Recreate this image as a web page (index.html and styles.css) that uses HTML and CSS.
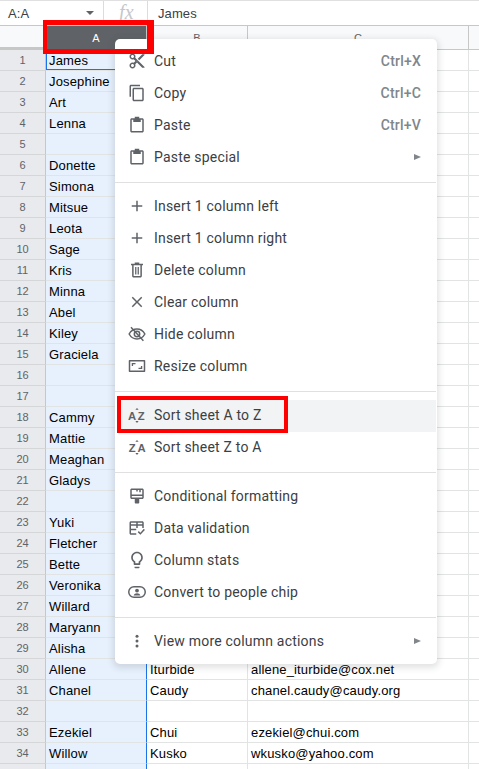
FILE: index.html
```html
<!DOCTYPE html>
<html lang="en">
<head>
<meta charset="utf-8">
<title>Sheet</title>
<link rel="stylesheet" href="styles.css">
</head>
<body>
<div class="app">
  <div class="formula-bar">
    <div class="name-box"><span>A:A</span><i class="caret"></i></div>
    <div class="fx">fx</div>
    <div class="formula-value">James</div>
  </div>
  <table class="sheet">
    <colgroup><col class="c0"><col class="c1"><col class="c2"><col class="c3"><col class="c4"></colgroup>
    <thead><tr><th class="corner"></th><th class="head sel">A</th><th class="head">B</th><th class="head">C</th><th class="head"></th></tr></thead>
    <tbody>
      <tr><th>1</th><td class="a active">James</td><td></td><td></td><td></td></tr>
      <tr><th>2</th><td class="a">Josephine</td><td></td><td></td><td></td></tr>
      <tr><th>3</th><td class="a">Art</td><td></td><td></td><td></td></tr>
      <tr><th>4</th><td class="a">Lenna</td><td></td><td></td><td></td></tr>
      <tr><th>5</th><td class="a"></td><td></td><td></td><td></td></tr>
      <tr><th>6</th><td class="a">Donette</td><td></td><td></td><td></td></tr>
      <tr><th>7</th><td class="a">Simona</td><td></td><td></td><td></td></tr>
      <tr><th>8</th><td class="a">Mitsue</td><td></td><td></td><td></td></tr>
      <tr><th>9</th><td class="a">Leota</td><td></td><td></td><td></td></tr>
      <tr><th>10</th><td class="a">Sage</td><td></td><td></td><td></td></tr>
      <tr><th>11</th><td class="a">Kris</td><td></td><td></td><td></td></tr>
      <tr><th>12</th><td class="a">Minna</td><td></td><td></td><td></td></tr>
      <tr><th>13</th><td class="a">Abel</td><td></td><td></td><td></td></tr>
      <tr><th>14</th><td class="a">Kiley</td><td></td><td></td><td></td></tr>
      <tr><th>15</th><td class="a">Graciela</td><td></td><td></td><td></td></tr>
      <tr><th>16</th><td class="a"></td><td></td><td></td><td></td></tr>
      <tr><th>17</th><td class="a"></td><td></td><td></td><td></td></tr>
      <tr><th>18</th><td class="a">Cammy</td><td></td><td></td><td></td></tr>
      <tr><th>19</th><td class="a">Mattie</td><td></td><td></td><td></td></tr>
      <tr><th>20</th><td class="a">Meaghan</td><td></td><td></td><td></td></tr>
      <tr><th>21</th><td class="a">Gladys</td><td></td><td></td><td></td></tr>
      <tr><th>22</th><td class="a"></td><td></td><td></td><td></td></tr>
      <tr><th>23</th><td class="a">Yuki</td><td></td><td></td><td></td></tr>
      <tr><th>24</th><td class="a">Fletcher</td><td></td><td></td><td></td></tr>
      <tr><th>25</th><td class="a">Bette</td><td></td><td></td><td></td></tr>
      <tr><th>26</th><td class="a">Veronika</td><td></td><td></td><td></td></tr>
      <tr><th>27</th><td class="a">Willard</td><td></td><td></td><td></td></tr>
      <tr><th>28</th><td class="a">Maryann</td><td></td><td></td><td></td></tr>
      <tr><th>29</th><td class="a">Alisha</td><td></td><td></td><td></td></tr>
      <tr><th>30</th><td class="a">Allene</td><td>Iturbide</td><td>allene_iturbide@cox.net</td><td></td></tr>
      <tr><th>31</th><td class="a">Chanel</td><td>Caudy</td><td>chanel.caudy@caudy.org</td><td></td></tr>
      <tr><th>32</th><td class="a"></td><td></td><td></td><td></td></tr>
      <tr><th>33</th><td class="a">Ezekiel</td><td>Chui</td><td>ezekiel@chui.com</td><td></td></tr>
      <tr><th>34</th><td class="a">Willow</td><td>Kusko</td><td>wkusko@yahoo.com</td><td></td></tr>
      <tr><th></th><td class="a"></td><td></td><td></td><td></td></tr>
    </tbody>
  </table>

  <div class="menu">
    <div class="item"><svg class="ic" viewBox="0 0 24 24"><path d="M9.64 7.64c.23-.5.36-1.05.36-1.64 0-2.21-1.79-4-4-4S2 3.79 2 6s1.79 4 4 4c.59 0 1.14-.13 1.64-.36L10 12l-2.36 2.36C7.14 14.13 6.59 14 6 14c-2.21 0-4 1.79-4 4s1.79 4 4 4 4-1.79 4-4c0-.59-.13-1.14-.36-1.64L12 14l7 7h3v-1L9.64 7.64zM6 8c-1.1 0-2-.89-2-2s.9-2 2-2 2 .89 2 2-.9 2-2 2zm0 12c-1.1 0-2-.89-2-2s.9-2 2-2 2 .89 2 2-.9 2-2 2zm6-7.5c-.28 0-.5-.22-.5-.5s.22-.5.5-.5.5.22.5.5-.22.5-.5.5zM19 3l-6 6 2 2 7-7V3h-3z"/></svg><span class="label">Cut</span><span class="key">Ctrl+X</span></div>
    <div class="item"><svg class="ic" viewBox="0 0 24 24"><path d="M16 1H4c-1.1 0-2 .9-2 2v14h2V3h12V1zm3 4H8c-1.1 0-2 .9-2 2v14c0 1.1.9 2 2 2h11c1.1 0 2-.9 2-2V7c0-1.1-.9-2-2-2zm0 16H8V7h11v14z"/></svg><span class="label">Copy</span><span class="key">Ctrl+C</span></div>
    <div class="item"><svg class="ic" viewBox="0 0 24 24"><path d="M19 3h-4V1H9v2H5c-1.1 0-2 .9-2 2v15c0 1.1.9 2 2 2h14c1.1 0 2-.9 2-2V5c0-1.1-.9-2-2-2zm0 17H5V5h2v3h10V5h2v15z"/></svg><span class="label">Paste</span><span class="key">Ctrl+V</span></div>
    <div class="item"><svg class="ic" viewBox="0 0 24 24"><path d="M19 3h-4V1H9v2H5c-1.1 0-2 .9-2 2v15c0 1.1.9 2 2 2h14c1.1 0 2-.9 2-2V5c0-1.1-.9-2-2-2zm0 17H5V5h2v3h10V5h2v15z"/></svg><span class="label">Paste special</span><i class="arrow"></i></div>
    <div class="sep"></div>
    <div class="item"><svg class="ic" viewBox="0 0 24 24"><path d="M19 13h-6v6h-2v-6H5v-2h6V5h2v6h6v2z"/></svg><span class="label">Insert 1 column left</span></div>
    <div class="item"><svg class="ic" viewBox="0 0 24 24"><path d="M19 13h-6v6h-2v-6H5v-2h6V5h2v6h6v2z"/></svg><span class="label">Insert 1 column right</span></div>
    <div class="item"><svg class="ic" viewBox="0 0 24 24"><path d="M15 2H9v1.5H4V5.5h1.5V20c0 1.1.9 2 2 2h9c1.100 0 2-.9 2-2V5.500H20V3.500h-5V2zM16.500 20h-9V5.500h9V20zM9.500 8h1.700v10H9.500V8zm3.300 0h1.700v10h-1.700V8z"/></svg><span class="label">Delete column</span></div>
    <div class="item"><svg class="ic" viewBox="0 0 24 24"><path d="M19 6.410 17.590 5 12 10.590 6.410 5 5 6.410 10.590 12 5 17.590 6.410 19 12 13.410 17.590 19 19 17.590 13.410 12z"/></svg><span class="label">Clear column</span></div>
    <div class="item"><svg class="ic" viewBox="0 0 24 24"><path class="line" d="M1.500 12C4 7.500 7.700 5.300 12 5.300s8 2.200 10.500 6.700C20 16.500 16.300 18.700 12 18.700S4 16.500 1.500 12z"/><circle class="line" cx="12" cy="12" r="3.600"/><path class="line" d="M4 3l16.500 18"/></svg><span class="label">Hide column</span></div>
    <div class="item"><svg class="ic" viewBox="0 0 24 24"><path d="M2 4h20c.6 0 1 .4 1 1v14c0 .6-.4 1-1 1H2c-.6 0-1-.4-1-1V5c0-.6.4-1 1-1zm1 2v12h18V6H3zm2 2h5v1.800H6.800V12H5V8zm14 8h-5v-1.800h3.200V12H19v4z"/></svg><span class="label">Resize column</span></div>
    <div class="sep"></div>
    <div class="item hover"><svg class="ic" viewBox="0 0 24 24"><text class="az" x="0" y="18.500">A</text><text class="az" x="13" y="18.500">Z</text><path d="M9.800 5 12 2.500 14.200 5zM12 22.500 9.800 20h4.400z"/></svg><span class="label">Sort sheet A to Z</span></div>
    <div class="item"><svg class="ic" viewBox="0 0 24 24"><text class="az" x="1" y="18.500">Z</text><text class="az" x="12.500" y="18.500">A</text><path d="M9.800 5 12 2.500 14.200 5zM12 22.500 9.800 20h4.400z"/></svg><span class="label">Sort sheet Z to A</span></div>
    <div class="sep"></div>
    <div class="item"><svg class="ic" viewBox="0 0 24 24"><path d="M5 2h14c1.100 0 2 .9 2 2v10c0 1.100-.9 2-2 2h-4v5c0 .6-.4 1-1 1h-4c-.6 0-1-.4-1-1v-5H5c-1.100 0-2-.9-2-2V4c0-1.100.9-2 2-2zm0 2v6h14V4h-2v3h-2V4h-2v2h-2V4H5zm0 8v2h14v-2H5z"/></svg><span class="label">Conditional formatting</span></div>
    <div class="item"><svg class="ic" viewBox="0 0 24 24"><path d="M4 3h15c1.100 0 2 .9 2 2v7h-2V9h-6v3h-2V9H4v4h7v2H4v4h7v2H4c-1.100 0-2-.9-2-2V5c0-1.100.9-2 2-2zm0 2v2h7V5H4zm9 0v2h6V5h-6zm9.500 9.500L16.500 21 13 17.500l1.400-1.400 2.100 2.100 4.600-5.100z"/></svg><span class="label">Data validation</span></div>
    <div class="item"><svg class="ic bulb" viewBox="0 0 24 24"><path d="M9 21c0 .55.45 1 1 1h4c.55 0 1-.45 1-1v-1H9v1zm3-19C8.140 2 5 5.140 5 9c0 2.380 1.190 4.470 3 5.740V17c0 .55.45 1 1 1h6c.55 0 1-.45 1-1v-2.260c1.810-1.270 3-3.360 3-5.740 0-3.860-3.140-7-7-7zm2.850 11.100-.85.600V16h-4v-2.300l-.85-.600C7.800 12.160 7 10.630 7 9c0-2.760 2.240-5 5-5s5 2.240 5 5c0 1.630-.8 3.160-2.150 4.100z"/></svg><span class="label">Column stats</span></div>
    <div class="item"><svg class="ic" viewBox="0 0 24 24"><rect class="line" x="1" y="5" width="22" height="14" rx="7"/><circle cx="12" cy="10" r="2.500"/><path d="M7.500 16.500c.5-2 2.500-3 4.500-3s4 1 4.500 3z"/></svg><span class="label">Convert to people chip</span></div>
    <div class="sep"></div>
    <div class="item"><svg class="ic" viewBox="0 0 24 24"><circle cx="12" cy="5.500" r="2"/><circle cx="12" cy="12" r="2"/><circle cx="12" cy="18.500" r="2"/></svg><span class="label">View more column actions</span><i class="arrow"></i></div>
  </div>

  <div class="mark mark-column"></div>
  <div class="mark mark-sort"></div>
</div>
</body>
</html>
```

FILE: styles.css
```css
* { box-sizing: border-box; }
html, body { margin: 0; height: 100%; overflow: hidden; background: #fff; }
.app { position: relative; width: 479px; height: 769px; overflow: hidden; font-family: "Liberation Sans", Arial, sans-serif; color: #000; }

.formula-bar { display: flex; align-items: center; height: 26px; border-top: 1px solid #e0e0e0; border-bottom: 1px solid #c7c7c7; font-size: 13px; color: #3c4043; letter-spacing: .1px; }
.name-box { display: flex; align-items: center; justify-content: space-between; width: 104px; height: 100%; padding: 0 7px 0 8px; border-right: 1px solid #dadce0; }
.caret { width: 0; height: 0; border: 4px solid transparent; border-top-color: #5f6368; border-bottom: 0; margin-right: 2px; }
.fx { width: 44px; height: 100%; padding-left: 15px; border-right: 1px solid #dadce0; font: italic 20px/22px "Liberation Serif", serif; color: #c4c7ca; }
.formula-value { padding-left: 10px; }

.sheet { table-layout: fixed; border-collapse: separate; border-spacing: 0; width: 479px; font-size: 13px; letter-spacing: .16px; }
.c0 { width: 46px; } .c1, .c2 { width: 101px; } .c3 { width: 221px; } .c4 { width: 10px; }
.sheet thead th { height: 24px; background: #f8f9fa; border-right: 1px solid #c7c7c7; border-bottom: 1px solid #c7c7c7; font-size: 11px; font-weight: 400; color: #5f6368; padding: 0; letter-spacing: 0; }
.sheet thead .corner { background: #f8f9fa; border-bottom: 3px solid #c7c7c7; }
.sheet thead .head:last-child { border-right: 0; }
.sheet thead .sel { background: #5f6368; color: #fff; }
.sheet tbody th { height: 21px; padding: 0; background: #e8eaed; border-right: 1px solid #c7c7c7; border-bottom: 1px solid #d5d6d8; font-size: 11px; font-weight: 400; color: #5f6368; letter-spacing: 0; }
.sheet td { height: 21px; padding: 0 3px; border-right: 1px solid #e2e3e3; border-bottom: 1px solid #e2e3e3; white-space: nowrap; overflow: hidden; color: #000; }
.sheet td:last-child { border-right: 0; }
.sheet td.a { background: #e7f0fd; border-right: 1px solid #1a73e8; }
.sheet td.active { box-shadow: inset 0 0 0 1px #1a73e8; }

.menu { position: absolute; left: 115px; top: 39px; width: 322px; height: 625px; padding: 7px 1px 6px 0; background: #fff; border-radius: 5px; box-shadow: 0 2px 6px 2px rgba(60, 64, 67, .15); font-family: Roboto, sans-serif; font-size: 14px; letter-spacing: .2px; color: #3c4043; }
.item { display: flex; align-items: center; height: 32px; padding: 0 15px 2px 0; }
.item.hover { background: #f1f3f4; margin-left: 2px; }
.item.hover .ic { margin-left: 11px; }
.ic { width: 18px; height: 18px; margin: 0 8px 0 13px; flex: none; fill: #5f6368; }
.ic.bulb { width: 20px; height: 20px; margin: 0 7px 0 12px; }
.line { fill: none; stroke: #5f6368; stroke-width: 2; }
.az { font: 700 15px "Liberation Sans", sans-serif; fill: #5f6368; letter-spacing: 0; }
.label { flex: 1; white-space: nowrap; }
.key { color: #80868b; font-size: 14px; letter-spacing: .2px; font-weight: 500; }
.arrow { width: 0; height: 0; border-left: 7px solid #80868b; border-top: 3.500px solid transparent; border-bottom: 3.500px solid transparent; }
.sep { height: 1px; margin: 8px 0; background: #e0e0e0; }

.mark { position: absolute; border: solid #f00; z-index: 2; }
.mark-column { left: 43px; top: 20px; width: 111px; height: 34px; border-width: 5px 7px 5px 4px; }
.mark-sort { left: 117px; top: 396px; width: 171px; height: 37px; border-width: 4px; }
```
